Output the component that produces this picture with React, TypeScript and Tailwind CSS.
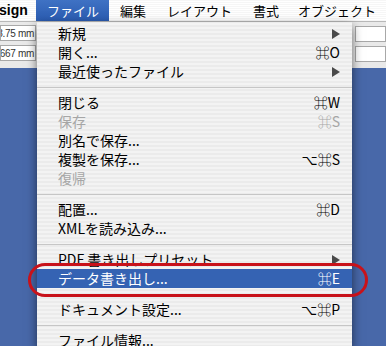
import React from 'react'

type Item = {
  label?: string
  shortcut?: string
  submenu?: boolean
  disabled?: boolean
  selected?: boolean
  separator?: boolean
}

const items: Item[] = [
  { label: '新規', submenu: true },
  { label: '開く...', shortcut: '⌘O' },
  { label: '最近使ったファイル', submenu: true },
  { separator: true },
  { label: '閉じる', shortcut: '⌘W' },
  { label: '保存', shortcut: '⌘S', disabled: true },
  { label: '別名で保存...' },
  { label: '複製を保存...', shortcut: '⌥⌘S' },
  { label: '復帰', disabled: true },
  { separator: true },
  { label: '配置...', shortcut: '⌘D' },
  { label: 'XMLを読み込み...' },
  { separator: true },
  { label: 'PDF 書き出しプリセット', submenu: true },
  { label: 'データ書き出し...', shortcut: '⌘E', selected: true },
  { separator: true },
  { label: 'ドキュメント設定...', shortcut: '⌥⌘P' },
  { separator: true },
  { label: 'ファイル情報...' },
]

const font = { fontFamily: '"Noto Sans CJK JP", "DejaVu Sans", sans-serif' }

function Arrow({ color }: { color: string }) {
  return (
    <svg width="8" height="10" viewBox="0 0 8 10">
      <path d="M0 0 L8 5 L0 10 Z" fill={color} />
    </svg>
  )
}

function Field({ text, align }: { text: string; align: 'right' | 'left' }) {
  return (
    <div
      className={`h-[16px] bg-white border border-[#a8a8a8] flex items-center overflow-hidden whitespace-nowrap text-[10px] tracking-[-0.3px] text-[#333] ${
        align === 'right' ? 'justify-end pr-[1px]' : 'justify-start pl-[2px]'
      }`}
      style={{ fontFamily: '"Liberation Sans", sans-serif' }}
    >
      {text}
    </div>
  )
}

export default function App() {
  return (
    <div className="relative w-[386px] h-[346px] overflow-hidden bg-[#4868a9]" style={font}>
      {/* menu bar */}
      <div className="h-[22px] flex items-center whitespace-nowrap bg-[repeating-linear-gradient(0deg,#f6f6f6_0px,#f6f6f6_1px,#ffffff_1px,#ffffff_2px)] border-b border-[#b8b8b8] text-[13px] text-black">
        <div
          className="w-[37px] shrink-0 h-full flex items-center font-bold text-[14px] -ml-[1px]"
          style={{ fontFamily: '"Liberation Sans", sans-serif' }}
        >
          sign
        </div>
        <div className="shrink-0 h-full flex items-center pl-[11px] pr-[10px] bg-[linear-gradient(#3f72c4,#2a5bb0)] text-white">
          ファイル
        </div>
        <div className="shrink-0 h-full flex items-center pl-[11px] pr-[10px]">編集</div>
        <div className="shrink-0 h-full flex items-center pl-[11px] pr-[10px]">レイアウト</div>
        <div className="shrink-0 h-full flex items-center pl-[11px] pr-[8px]">書式</div>
        <div className="shrink-0 h-full flex items-center pl-[11px] pr-[10px]">オブジェクト</div>
      </div>

      <div className="flex">
        {/* left strip */}
        <div className="w-[37px] flex flex-col">
          <div className="h-[46px] bg-[#e9e9e9] flex flex-col gap-[4px] pt-[3px] pr-[1px]">
            <Field text="8.75 mm" align="right" />
            <Field text="667 mm" align="right" />
          </div>
        </div>

        {/* menu */}
        <div className="relative z-10 w-[315px] h-[325px] pt-[2px] bg-[repeating-linear-gradient(0deg,#ebebeb_0px,#ebebeb_2px,#f3f3f3_2px,#f3f3f3_4px)] shadow-[0_4px_10px_rgba(0,0,0,0.55)] text-[14px]">
          {items.map((it, i) =>
            it.separator ? (
              <div key={i} className="h-[12px] flex items-center">
                <div className="w-full h-[1px] bg-[#c6c6c6]" />
              </div>
            ) : (
              <div
                key={i}
                className={`h-[19px] flex items-center justify-between pl-[21px] pr-[12px] ${
                  it.selected ? 'bg-[#3563b3] text-white' : it.disabled ? 'text-[#a6a6a6]' : 'text-black'
                }`}
              >
                <span className="whitespace-nowrap">{it.label}</span>
                {it.submenu ? (
                  <Arrow color="#4a4a4a" />
                ) : (
                  <span className="whitespace-nowrap">{it.shortcut}</span>
                )}
              </div>
            )
          )}
        </div>

        {/* right strip */}
        <div className="flex-1 flex flex-col">
          <div className="h-[46px] bg-[#e9e9e9] flex flex-col gap-[4px] pt-[4px] pl-[3px]">
            <Field text="" align="left" />
            <Field text="" align="left" />
          </div>
        </div>
      </div>

      {/* red highlight ring */}
      <div className="absolute left-[28px] top-[263px] w-[340px] h-[34px] rounded-full border-[3px] border-[#c8121a] z-20" />
    </div>
  )
}
